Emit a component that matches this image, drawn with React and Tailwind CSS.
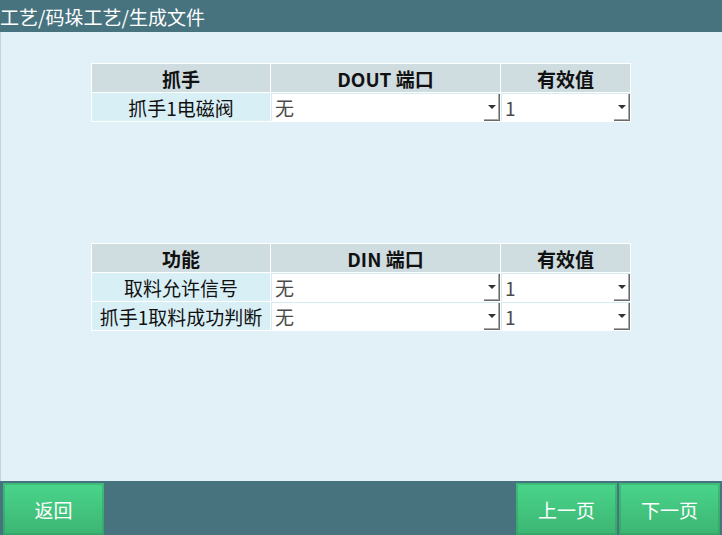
import React from "react";

function Select({ value }) {
  return (
    <div className="flex h-[28px] w-full bg-white border-l border-t border-[#d6ecf3]">
      <div className="flex-1 flex items-center pl-[3px] text-[19px] leading-none text-[#4a4a4a]">{value}</div>
      <div className="w-[16px] h-full flex items-center justify-center border-r border-b border-[#6a6a6a] shadow-[inset_-1px_-1px_0_#a8a8a8]">
        <div className="w-0 h-0 border-l-[4px] border-r-[4px] border-t-[4px] border-l-transparent border-r-transparent border-t-[#333]" />
      </div>
    </div>
  );
}

function IOTable({ title, port, rows }) {
  return (
    <div className="w-[540px] bg-white p-px grid grid-cols-[178px_229px_129px] gap-px">
      <div className="h-[28px] bg-[#cfdce0] flex items-center justify-center text-[19px] font-bold text-[#111] leading-none">{title}</div>
      <div className="h-[28px] bg-[#cfdce0] flex items-center justify-center text-[19px] font-bold text-[#111] leading-none">{port}</div>
      <div className="h-[28px] bg-[#cfdce0] flex items-center justify-center text-[19px] font-bold text-[#111] leading-none">有效值</div>
      {rows.map((r) => (
        <React.Fragment key={r}>
          <div className="h-[28px] bg-[#d9eff6] flex items-center justify-center text-[19px] text-[#111] leading-none whitespace-nowrap">{r}</div>
          <Select value="无" />
          <Select value="1" />
        </React.Fragment>
      ))}
    </div>
  );
}

function GreenButton({ children }) {
  return (
    <button className="w-[101px] h-[52px] flex items-center justify-center text-white text-[19px] leading-none bg-gradient-to-b from-[#4ad58b] to-[#3cb572] shadow-[inset_0_0_0_2px_rgba(40,140,85,0.35)]">
      {children}
    </button>
  );
}

export default function App() {
  return (
    <div className="w-[722px] h-[535px] flex flex-col font-['Noto_Sans_CJK_SC','Microsoft_YaHei',sans-serif] overflow-hidden">
      <div className="h-[32px] bg-[#47737f] flex items-center px-0 text-white text-[19px] leading-none">
        工艺/码垛工艺/生成文件
      </div>
      <div className="flex-1 bg-[#e2f1f7] border-l border-[#c9d3d7] flex flex-col items-start pl-[90px]">
        <div className="mt-[31px]">
          <IOTable title="抓手" port="DOUT 端口" rows={["抓手1电磁阀"]} />
        </div>
        <div className="mt-[121px]">
          <IOTable title="功能" port="DIN 端口" rows={["取料允许信号", "抓手1取料成功判断"]} />
        </div>
      </div>
      <div className="h-[54px] bg-[#47737f] flex items-end pb-0 pl-[3px] pr-[2px]">
        <GreenButton>返回</GreenButton>
        <div className="flex-1" />
        <div className="flex gap-[2px]">
          <GreenButton>上一页</GreenButton>
          <GreenButton>下一页</GreenButton>
        </div>
      </div>
    </div>
  );
}
